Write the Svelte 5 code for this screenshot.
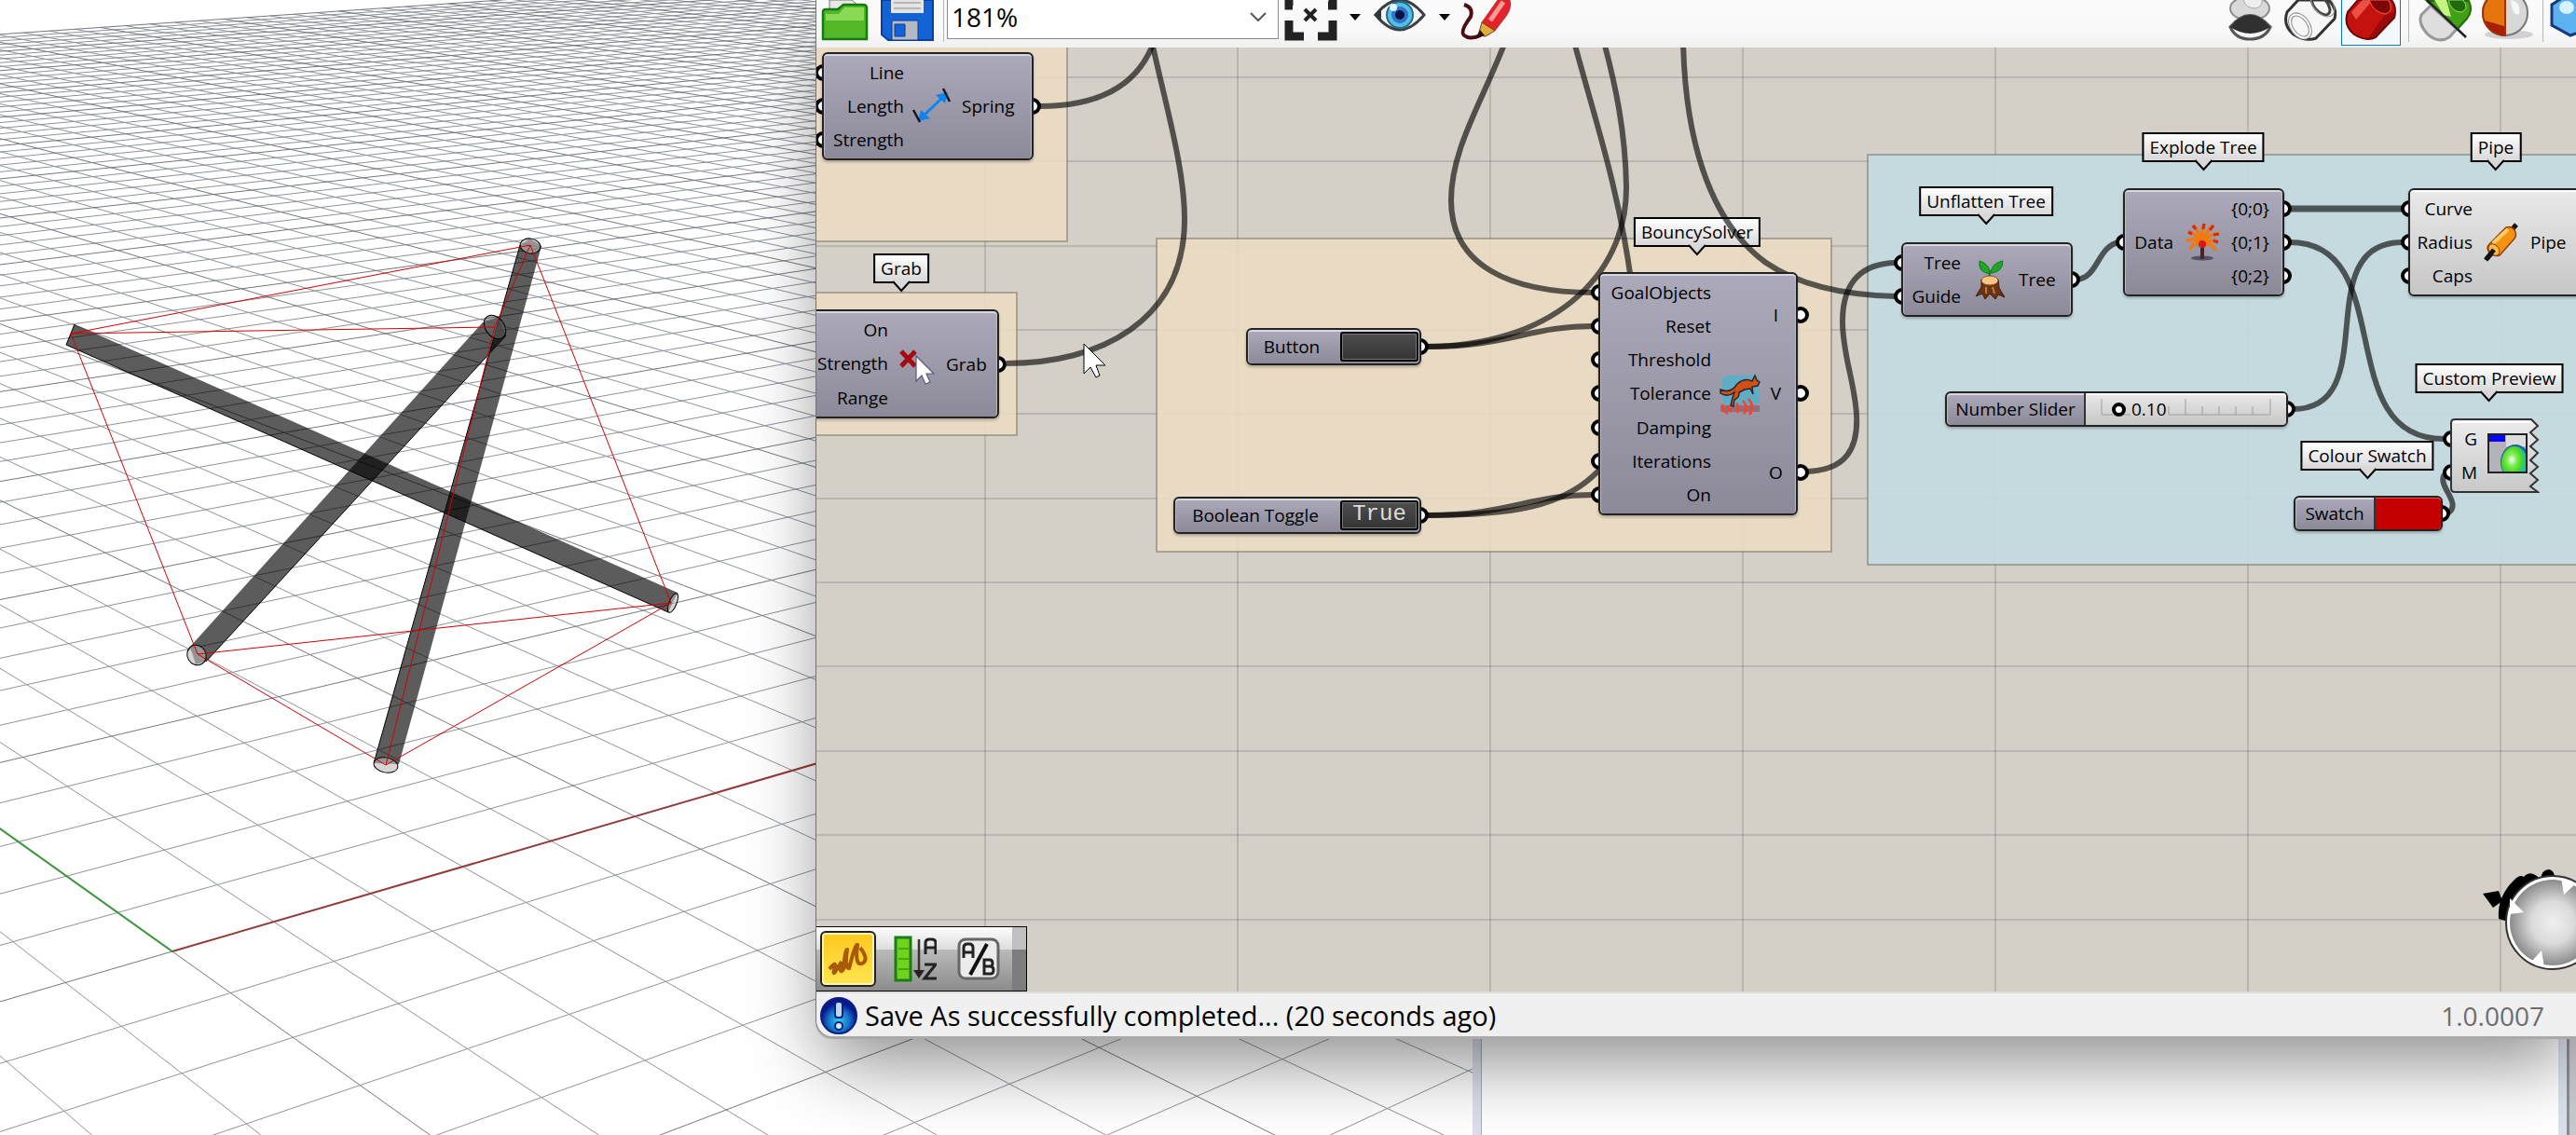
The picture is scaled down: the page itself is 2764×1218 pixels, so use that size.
<script>
  // Perspective ground plane: maps grid units to viewport pixels.
  function project(u, v) {
    const w = 1 + 0.02504 * u + 0.03311 * v;
    return { w, x: (184.8 + 116.36 * u - 54.37 * v) / w, y: -281 + 1302 / w };
  }

  const EXTENT = 70;
  const NEAR = 0.3;

  function segment(u0, v0, u1, v1) {
    let a = project(u0, v0);
    const b = project(u1, v1);
    if (b.w <= NEAR) return null;
    if (a.w < NEAR) {
      const t = (NEAR - a.w) / (b.w - a.w);
      a = project(u0 + (u1 - u0) * t, v0 + (v1 - v0) * t);
    }
    return `M${a.x.toFixed(1)} ${a.y.toFixed(1)}L${b.x.toFixed(1)} ${b.y.toFixed(1)}`;
  }

  let minor = '';
  let major = '';
  for (let i = -EXTENT; i <= EXTENT; i++) {
    const d = (segment(i, -EXTENT, i, EXTENT) ?? '') + (segment(-EXTENT, i, EXTENT, i) ?? '');
    if (i % 5 === 0) major += d;
    else minor += d;
  }
  const axisX = segment(0, 0, EXTENT, 0);
  const axisY = segment(0, 0, 0, EXTENT);

  const cables = [
    [76, 358, 569, 263], [76, 358, 531, 351], [76, 358, 212, 702], [569, 263, 720, 647],
    [569, 263, 531, 351], [531, 351, 414, 821], [720, 647, 212, 702], [212, 702, 414, 821], [414, 821, 720, 647]
  ];

  // Canvas items are kept in document coordinates; pan shifts them into the view.
  const pan = { x: 876, y: 51 };

  const groups = [
    { x: 800, y: 20, w: 345, h: 239, tone: 'tan' },
    { x: 800, y: 314, w: 291, h: 153, tone: 'tan' },
    { x: 1241, y: 256, w: 724, h: 336, tone: 'tan' },
    { x: 2004, y: 166, w: 900, h: 440, tone: 'blue' }
  ];

  const tags = [
    { x: 967, y: 272, text: 'Grab' },
    { x: 1821, y: 233, text: 'BouncySolver' },
    { x: 2131, y: 200, text: 'Unflatten Tree' },
    { x: 2364, y: 142, text: 'Explode Tree' },
    { x: 2678, y: 142, text: 'Pipe' },
    { x: 2671, y: 390, text: 'Custom Preview' },
    { x: 2540, y: 473, text: 'Colour Swatch' }
  ];

  const nodes = [
    { x: 882, y: 56, w: 227, h: 116, inW: 88, icon: 'spring', ins: ['Line', 'Length', 'Strength'], outs: ['Spring'] },
    { x: 862, y: 332, w: 210, h: 117, inW: 91, icon: 'grab', ins: ['On', 'Strength', 'Range'], outs: ['Grab'] },
    { x: 1715, y: 292, w: 214, h: 261, inW: 121, icon: 'solver', ins: ['GoalObjects', 'Reset', 'Threshold', 'Tolerance', 'Damping', 'Iterations', 'On'], outs: ['I', 'V', 'O'] },
    { x: 2040, y: 260, w: 184, h: 80, inW: 64, icon: 'unflatten', ins: ['Tree', 'Guide'], outs: ['Tree'] },
    { x: 2278, y: 202, w: 173, h: 116, inW: 54, icon: 'explode', ins: ['Data'], outs: ['{0;0}', '{0;1}', '{0;2}'] },
    { x: 2584, y: 202, w: 200, h: 116, inW: 69, icon: 'pipe', ins: ['Curve', 'Radius', 'Caps'], outs: ['Pipe'], light: true }
  ];

  const wires = [
    'M1115 114C1175 114 1220 95 1238 45',
    'M1080 390C1180 390 1271 345 1271 235C1271 180 1250 110 1236 45',
    'M1615 45C1590 110 1557 160 1557 215C1557 285 1620 314 1710 314',
    'M1530 372C1620 372 1640 350 1710 350',
    'M1530 372C1660 372 1746 300 1745 200C1744 140 1733 90 1721 45',
    'M1689 45C1712 130 1736 200 1750 300',
    'M1530 553C1620 553 1680 545 1718 502',
    'M1530 553C1620 553 1640 531 1710 531',
    'M1806 45C1808 140 1830 235 1895 282C1930 306 1980 317 2036 318',
    'M1935 506C1982 506 1994 480 1992 445C1990 410 1977 380 1977 345C1977 300 2000 282 2036 282',
    'M2228 300C2252 298 2250 264 2274 260',
    'M2457 260C2575 260 2500 471 2622 471',
    'M2460 439C2560 439 2475 260 2578 260',
    'M2626 551C2644 540 2612 520 2624 508'
  ];

  const gridX = Array.from({ length: 7 }, (_, i) => 1057 + i * 271);
  const gridY = Array.from({ length: 11 }, (_, i) => Math.round(83 + i * 90.35));

  let zoom = $state('181%');
  let toggled = $state(true);
  let amount = $state(0.1);
</script>

{#snippet nodeIcon(name)}
  <svg class="node-icon" viewBox="0 0 44 44" aria-hidden="true">
    {#if name === 'spring'}
      <path d="M10 34L34 11" stroke="#0d84f0" stroke-width="3" />
      <path d="M6 38L9 26L19 35ZM38 7L35 19L25 10Z" fill="#0d84f0" />
      <path d="M1 26L8 39M33 3L40 17" stroke="#16181d" stroke-width="2.5" />
    {:else if name === 'grab'}
      <path d="M5 8L20 24M20 8L5 24" stroke="#a50a10" stroke-width="5" />
      <path d="M21 13V40L27 34L31 43L36 41L32 32H40Z" fill="#fff" stroke="#555a78" stroke-width="1.2" />
    {:else if name === 'solver'}
      <rect x="3" y="2" width="40" height="31" rx="5" fill="#5eacc6" />
      <path d="M1 34H43V41H1Z" fill="#8e5d66" opacity=".7" />
      <path d="M3 33Q3 40 9 43M9 34Q9 39 13 41M18 32Q23 36 19 42M25 29Q32 36 26 43M31 27Q39 36 32 44" fill="none" stroke="#ff3f24" stroke-width="2.4" />
      <path d="M1 17Q12 22 19 11Q27 4 35 8L38 2L40 7L43 9L41 13L35 14L36 22L33 16L27 17L21 20Q22 25 16 28L15 35L12 34L14 26L16 20Q9 26 1 21Z" fill="#cf4f15" stroke="#292229" stroke-width="1.4" />
    {:else if name === 'unflatten'}
      <path d="M21 25Q22 15 22 12" stroke="#178d20" stroke-width="2.5" />
      <path d="M22 16Q9 14 11 2Q22 5 22 16ZM23 15Q24 4 36 2Q36 14 23 15Z" fill="#21a529" stroke="#0e7c20" />
      <path d="M13 22Q22 18 31 22L32 31L38 41L31 38L28 43L22 37L17 43L14 37L7 40L13 30Z" fill="#6b3513" stroke="#3c1b0b" />
      <ellipse cx="22" cy="23" rx="9" ry="5" fill="#f4c585" stroke="#8b4b1c" />
      <path d="M18 30V37M25 30L27 37" stroke="#c07d3c" stroke-width="2" />
    {:else if name === 'explode'}
      <ellipse cx="22" cy="39" rx="12" ry="2.5" fill="#555064" />
      <path d="M22 40V22" stroke="#43282a" stroke-width="4" />
      <path d="M21 24Q16 17 5 20M20 22Q14 11 7 11M21 22Q18 8 12 4M22 22Q21 8 24 2M23 22Q26 8 34 4M24 22Q29 12 40 13M24 24Q31 18 39 22M20 25Q13 20 9 30M24 25Q33 22 36 31" fill="none" stroke="#f07a10" stroke-width="3.6" />
      <path d="M7 11L11 13M12 4L15 8M24 2L23 8M34 4L30 9M40 13L34 14M39 22L34 20" stroke="#d42b17" stroke-width="3.2" />
      <circle cx="22" cy="24" r="4" fill="#d3191c" />
    {:else if name === 'pipe'}
      <path d="M6 40L38 3" stroke="#111" stroke-width="5" />
      <path d="M9 24L27 6Q33 4 36 9Q39 14 36 18L20 36Q14 38 9 33Q5 28 9 24Z" fill="#f79110" stroke="#93420a" stroke-width="1.5" />
      <path d="M13 23L29 8" stroke="#ffd067" stroke-width="4" />
      <ellipse cx="14" cy="30" rx="5" ry="7" transform="rotate(-40 14 30)" fill="#ffb94a" stroke="#93420a" />
      <path d="M5 41L14 30" stroke="#111" stroke-width="5" />
    {/if}
  </svg>
{/snippet}

<main class="desktop">
  <section class="viewport" aria-label="Perspective viewport">
    <svg class="scene" aria-hidden="true">
      <path d={minor} class="minor" />
      <path d={major} class="major" />
      <path d={axisX} class="axis-x" />
      <path d={axisY} class="axis-y" />
      <g class="struts">
        <path d="M80 348L727 636L717 657L71 370Z" />
        <path d="M518 346L204 694L210 713L221 710L543 360L535 340Z" />
        <path d="M558 263L401 819L428 820L581 264L569 256Z" />
      </g>
      <g class="outline">
        <path d="M80 348L71 370L717 657" />
        <path d="M543 360L221 710" />
        <path d="M558 263L401 819" />
        <ellipse cx="722" cy="647" rx="4" ry="11" transform="rotate(22 722 647)" />
        <ellipse cx="531" cy="351" rx="10" ry="14" transform="rotate(-38 531 351)" class="shaded" />
        <ellipse cx="211" cy="703" rx="10" ry="11" transform="rotate(-30 211 703)" />
        <ellipse cx="569" cy="264" rx="11" ry="8" transform="rotate(10 569 264)" />
        <ellipse cx="414" cy="821" rx="13" ry="8" transform="rotate(10 414 821)" />
      </g>
      {#each cables as [x1, y1, x2, y2]}
        <line {x1} {y1} {x2} {y2} class="cable" />
      {/each}
    </svg>
    <div class="pane"></div>
    <div class="gutter"></div>
  </section>

  <section class="window" aria-label="Definition editor">
    <header class="toolbar">
      <button class="tool" aria-label="Open">
        <svg viewBox="0 0 64 51">
          <path d="M14 0H38L45 6V20H14Z" fill="#e8e8e8" stroke="#777" />
          <path d="M7 13Q7 10 10 10H23L29 5H50Q54 5 54 9V42H7Z" fill="#52b827" stroke="#177a13" stroke-width="2.5" />
          <path d="M10 15H24L30 8H51V22H10Z" fill="#a4e86b" opacity=".7" />
        </svg>
      </button>
      <button class="tool" aria-label="Save">
        <svg viewBox="0 0 64 51">
          <path d="M6 0H61V43H13L6 37Z" fill="#1264d6" stroke="#0b3f9d" stroke-width="2" />
          <path d="M16 0H51V14H16Z" fill="#e4e4e4" />
          <path d="M19 3H48M19 9H48" stroke="#b7b7b7" stroke-width="2" />
          <path d="M17 22H45V43H17Z" fill="#b5b8c0" stroke="#083c91" />
          <path d="M20 26H31V39H20Z" fill="#1264d6" stroke="#0a3c92" />
        </svg>
      </button>
      <span class="rule"></span>
      <div class="combo">
        <select aria-label="Zoom level" bind:value={zoom}>
          <option>100%</option>
          <option>181%</option>
          <option>200%</option>
        </select>
        <svg viewBox="0 0 18 10" aria-hidden="true"><path d="M1 1L9 9L17 1" /></svg>
      </div>
      <button class="tool" aria-label="Zoom extents">
        <svg viewBox="0 0 64 51">
          <path d="M9 0V6H13M51 6H56V0M9 22V39H25M56 22V39H40" fill="none" stroke="#222" stroke-width="9" />
          <path d="M26 10L38 22M38 10L26 22" stroke="#222" stroke-width="4" />
        </svg>
      </button>
      <button class="more" aria-label="Zoom options"><svg viewBox="0 0 12 7"><path d="M0 0H12L6 7Z" /></svg></button>
      <button class="tool" aria-label="Preview">
        <svg viewBox="0 0 64 51">
          <path d="M6 16Q32 -16 58 16Q32 48 6 16Z" fill="#f5f5f5" stroke="#3c4045" stroke-width="3" />
          <circle cx="32" cy="16" r="14" fill="#55bfe0" stroke="#216b8f" stroke-width="2" />
          <circle cx="32" cy="16" r="9" fill="#2f72d2" />
          <circle cx="32" cy="16" r="5" fill="#07143a" />
          <circle cx="25" cy="8" r="4" fill="#e2f6ff" />
          <path d="M4 16L12 9V23Z" fill="#33373c" />
        </svg>
      </button>
      <button class="more" aria-label="Preview options"><svg viewBox="0 0 12 7"><path d="M0 0H12L6 7Z" /></svg></button>
      <button class="tool" aria-label="Sketch">
        <svg viewBox="4 0 64 51">
          <path d="M9 5Q19 8 16 18Q4 34 9 38Q15 43 26 38" fill="none" stroke="#4a0f10" stroke-width="4" />
          <path d="M28 24L45 0H58Q60 8 55 16L42 33Z" fill="#e4222a" stroke="#c03036" />
          <path d="M37 22L51 2" stroke="#ff9a9a" stroke-width="5" />
          <path d="M28 24L42 33L32 39L24 38Z" fill="#dfac3e" stroke="#6f4313" />
          <path d="M26 32L31 38L21 42Z" fill="#35090c" />
        </svg>
      </button>

      <span class="spacer"></span>

      <button class="tool" aria-label="No preview">
        <svg viewBox="0 0 64 51">
          <ellipse cx="32" cy="9" rx="21" ry="13" fill="#d9d9d9" stroke="#8e8e8e" stroke-width="2" />
          <path d="M25 0Q28 9 38 9Q46 7 45 0" fill="#eee" stroke="#aaa" />
          <path d="M11 29Q32 4 54 29Q48 42 32 42Q17 42 11 29Z" fill="#f5f5f5" stroke="#555" stroke-width="3" />
          <path d="M11 29Q32 3 54 29Q32 43 11 29Z" fill="#303030" />
        </svg>
      </button>
      <button class="tool" aria-label="Wireframe preview">
        <svg viewBox="0 0 64 51">
          <path d="M8 13L20 0H52Q62 8 59 20L39 41Q28 45 15 37Q3 27 8 13Z" fill="#f7f7f7" stroke="#333" stroke-width="3" />
          <ellipse cx="22" cy="28" rx="9" ry="14" transform="rotate(-35 22 28)" fill="none" stroke="#888" stroke-width="4" />
          <ellipse cx="22" cy="28" rx="9" ry="14" transform="rotate(-35 22 28)" fill="none" stroke="#fff" stroke-width="2" />
          <ellipse cx="44" cy="5" rx="7" ry="13" transform="rotate(-40 44 5)" fill="none" stroke="#444" stroke-width="3" />
          <ellipse cx="46" cy="4" rx="10" ry="16" transform="rotate(-40 46 4)" fill="none" stroke="#999" stroke-width="1" />
        </svg>
      </button>
      <button class="tool active" aria-label="Shaded preview" aria-pressed="true">
        <svg viewBox="0 0 64 51">
          <path d="M7 13L18 0H54Q60 8 57 19L37 40Q27 45 14 37Q2 27 7 13Z" fill="#c4120e" stroke="#680707" stroke-width="2" />
          <path d="M11 13L23 0H34L16 21Z" fill="#ff6a5b" opacity=".7" />
          <path d="M46 17L57 12L55 20L37 39L29 41Z" fill="#790808" opacity=".6" />
          <path d="M30 0Q35 14 48 15Q57 12 51 0Z" fill="#7e0707" stroke="#ff5a4d" />
        </svg>
      </button>
      <span class="rule wide"></span>
      <button class="tool" aria-label="Preview selected only">
        <svg viewBox="0 0 64 51">
          <path d="M12 1H57Q62 11 55 20L44 32Z" fill="#3f9f16" stroke="#236b0c" stroke-width="2" />
          <path d="M20 0H33L38 18L30 16Z" fill="#c5f482" />
          <path d="M35 0Q38 13 49 13Q58 10 51 0Z" fill="#1e6b0e" stroke="#9bdc5b" />
          <path d="M16 6L44 31L36 40Q25 47 13 37Q2 25 6 16Z" fill="#dedede" stroke="#999" stroke-width="3" />
          <path d="M12 0L54 40" stroke="#222" stroke-width="2.5" />
        </svg>
      </button>
      <button class="tool" aria-label="Document preview settings">
        <svg viewBox="0 0 64 51">
          <ellipse cx="36" cy="37" rx="26" ry="5" fill="#999" opacity=".4" />
          <circle cx="32" cy="14" r="24" fill="#d8d8d8" stroke="#777" stroke-width="2" />
          <path d="M32 -10V38A24 24 0 0 1 32 -10Z" fill="#e5760e" stroke="#a03209" stroke-width="2" />
          <path d="M31 28Q18 24 10 22Q16 36 31 38Z" fill="#a72006" />
          <path d="M38 0Q49 2 47 15Q40 18 38 0Z" fill="#fff" opacity=".8" />
        </svg>
      </button>
      <span class="rule"></span>
      <button class="tool last" aria-label="Mesh quality">
        <svg viewBox="0 0 64 51">
          <path d="M6 5L28 -9L56 5V27L26 38L6 27Z" fill="#5bb2ee" stroke="#15397d" stroke-width="3" />
          <ellipse cx="22" cy="8" rx="8" ry="7" fill="#d6f1ff" />
        </svg>
      </button>
    </header>

    <div class="canvas">
      <svg class="layer" aria-hidden="true">
        <g transform="translate({-pan.x} {-pan.y})">
          {#each gridX as x}<path class="gridline" d="M{x} 0V1100" />{/each}
          {#each gridY as y}<path class="gridline" d="M800 {y}H4000" />{/each}
          {#each groups as g}
            <rect class="group {g.tone}" x={g.x} y={g.y} width={g.w} height={g.h} />
          {/each}
        </g>
      </svg>

      {#each tags as t}
        <div class="tag" style:left="{t.x - pan.x}px" style:top="{t.y - pan.y}px">
          {t.text}
          <svg viewBox="0 0 20 13" aria-hidden="true"><path d="M1 1L10 11L19 1" /></svg>
        </div>
      {/each}

      <svg class="layer wires" aria-hidden="true">
        <g transform="translate({-pan.x} {-pan.y})">
          {#each wires as d}<path {d} />{/each}
          <path class="thick" d="M2456 224H2580" />
        </g>
      </svg>

      {#each nodes as n}
        <article class="node" style:left="{n.x - pan.x}px" style:top="{n.y - pan.y}px" style:width="{n.w}px" style:height="{n.h}px">
          <div class="body" class:light={n.light}>
            <ul class="ins" style:width="{n.inW}px">
              {#each n.ins as name}<li class="port in">{name}</li>{/each}
            </ul>
            {@render nodeIcon(n.icon)}
            <ul class="outs">
              {#each n.outs as name}<li class="port out" class:mid={n.icon === 'solver'}>{name}</li>{/each}
            </ul>
          </div>
        </article>
      {/each}

      <div class="node" style:left="{1337 - pan.x}px" style:top="{352 - pan.y}px" style:width="188px">
        <div class="body strip port out">
          <label for="pulse">Button</label>
          <button id="pulse" class="dark" aria-label="Button"></button>
        </div>
      </div>

      <div class="node" style:left="{1259 - pan.x}px" style:top="{533 - pan.y}px" style:width="266px">
        <div class="body strip port out">
          <label for="toggle">Boolean Toggle</label>
          <button id="toggle" class="dark" aria-pressed={toggled} onclick={() => (toggled = !toggled)}>{toggled ? 'True' : 'False'}</button>
        </div>
      </div>

      <div class="node" style:left="{2087 - pan.x}px" style:top="{420 - pan.y}px" style:width="368px">
        <div class="body slider port out">
          <label for="amount">Number Slider</label>
          <div class="track">
            <svg viewBox="0 0 183 20" aria-hidden="true">
              <path d="M1 0V17H32M73 17H182M91 0V17M109 8V17M127 8V17M145 8V17M163 8V17M182 0V17M73 8V17" />
            </svg>
            <input id="amount" type="range" min="0" max="1" step="0.01" bind:value={amount} />
            <output for="amount">{amount.toFixed(2)}</output>
          </div>
        </div>
      </div>

      <div class="node" style:left="{2461 - pan.x}px" style:top="{532 - pan.y}px" style:width="160px">
        <div class="body swatch port out">
          <label for="colour">Swatch</label>
          <button id="colour" class="colour" aria-label="Swatch colour"></button>
        </div>
      </div>

      <div class="node torn" style:left="{2629 - pan.x}px" style:top="{449 - pan.y}px" style:width="96px" style:height="80px">
        <ul class="ins">
          <li class="port in">G</li>
          <li class="port in">M</li>
        </ul>
        <svg class="torn-shape" viewBox="0 0 96 80" aria-hidden="true">
          <defs>
            <linearGradient id="silver" x2="0" y2="1"><stop stop-color="#ececec" /><stop offset="1" stop-color="#c8c8c8" /></linearGradient>
            <radialGradient id="lime" cx=".4" cy=".4"><stop stop-color="#fff" /><stop offset=".35" stop-color="#7ff05a" /><stop offset=".75" stop-color="#4fd51c" /><stop offset="1" stop-color="#12c9a0" /></radialGradient>
            <clipPath id="frame"><rect x="41" y="17" width="41" height="41" /></clipPath>
          </defs>
          <path d="M5 1H87L94 8L86 15L94 23L86 30L94 37L86 45L94 52L86 59L94 66L86 73L94 79H5Q1 79 1 75V5Q1 1 5 1Z" fill="url(#silver)" stroke="#333" stroke-width="2" />
          <path d="M3 4H86" stroke="#fff" stroke-width="2" />
          <rect x="41" y="17" width="41" height="41" fill="#b4b4b8" stroke="#222" stroke-width="2" />
          <g clip-path="url(#frame)">
            <path d="M60 17H82V30H60Z" fill="#ddd" />
            <rect x="41" y="17" width="18" height="8" fill="#0808f5" />
            <ellipse cx="70" cy="47" rx="16" ry="19" fill="#255fa8" />
            <ellipse cx="69" cy="48" rx="14" ry="18" fill="url(#lime)" />
          </g>
          <rect x="41" y="17" width="41" height="41" fill="none" stroke="#222" stroke-width="2" />
        </svg>
      </div>

      <svg class="cursor" viewBox="0 0 26 38" aria-hidden="true" style:left="{1162 - pan.x}px" style:top="{368 - pan.y}px">
        <path d="M1 1V33L8 26L14 37L18 35L14 24H24Z" />
      </svg>

      <svg class="compass" viewBox="0 0 120 120" aria-hidden="true">
        <defs>
          <radialGradient id="ball"><stop stop-color="#f0f0f0" /><stop offset=".5" stop-color="#dadada" /><stop offset="1" stop-color="#8b8b8b" /></radialGradient>
        </defs>
        <path d="M0 29L17 26L21 37L11 44Z" />
        <path d="M17 56Q15 32 34 14Q40 8 44 11Q50 4 58 10L62 14Q63 3 71 3Q76 4 77 10L40 30L24 58Z" />
        <circle cx="75" cy="60" r="50" fill="#fff" stroke="#333" stroke-width="2" />
        <circle cx="75" cy="60" r="46" fill="url(#ball)" />
        <path d="M29 34L44 49L29 51ZM84 12L87 30L100 18ZM52 102L63 90L66 108Z" fill="#fff" />
      </svg>

      <div class="palette" role="toolbar" aria-label="Canvas widgets">
        <button class="chip on" aria-label="Sketch widget" aria-pressed="true">
          <svg viewBox="0 0 50 50"><path d="M5 36Q12 27 11 33Q8 43 11 39L18 28Q15 43 20 36Q22 14 24 15Q21 36 26 35Q33 8 35 10Q32 33 40 30Q48 26 38 13" fill="none" stroke="#a85a08" stroke-width="4" /></svg>
        </button>
        <button class="chip" aria-label="Align widget">
          <svg viewBox="0 0 50 50">
            <path d="M6 2H22V48H6Z" fill="#6fd31b" stroke="#1c7c17" stroke-width="3" />
            <path d="M9 14H20M9 25H20M9 36H20" stroke="#47a80e" stroke-width="2" />
            <path d="M31 4V42" stroke="#333" stroke-width="2.5" /><path d="M25 37H37L31 46Z" fill="#222" />
            <path d="M38 20V8Q38 4 42 4H45Q49 4 49 8V20M38 13H49M37 31H49L37 46H50" fill="none" stroke="#222" stroke-width="3" />
          </svg>
        </button>
        <button class="chip" aria-label="Rename widget">
          <svg viewBox="0 0 50 50">
            <rect x="4" y="4" width="42" height="42" rx="7" fill="#ececec" stroke="#666" stroke-width="3" />
            <path d="M34 9L16 42" stroke="#111" stroke-width="4" />
            <path d="M9 24V13Q9 9 13 9H15Q19 9 19 13V24M9 18H19M31 26V41H38Q41 41 41 37Q41 33 37 33Q40 33 40 30Q40 26 37 26ZM31 33H38" fill="none" stroke="#222" stroke-width="3" />
          </svg>
        </button>
      </div>
    </div>

    <footer class="status">
      <svg viewBox="0 0 40 40" aria-hidden="true">
        <defs><radialGradient id="info" cy=".65"><stop stop-color="#2fd0ea" /><stop offset=".6" stop-color="#1470c8" /><stop offset="1" stop-color="#08188e" /></radialGradient></defs>
        <circle cx="20" cy="20" r="19" fill="url(#info)" stroke="#0c1c85" stroke-width="2" />
        <rect x="16" y="5" width="8" height="17" rx="3" fill="#bcd8f4" stroke="#0a2080" stroke-width="2" />
        <circle cx="20" cy="31" r="4" fill="#d8ecfa" stroke="#0a2080" stroke-width="2" />
      </svg>
      <p>Save As successfully completed... (20 seconds ago)</p>
      <span class="version">1.0.0007</span>
    </footer>
  </section>
</main>

<style>
  :global(body) { margin: 0; background: #fff; }
  .desktop {
    display: grid;
    grid-template: 100vh / 875px minmax(0, 1fr);
    overflow: hidden;
    font-family: 'Open Sans', 'Noto Sans', sans-serif;
    font-size: 19px;
    line-height: 24px;
    color: #000;
  }
  button, select, input { font: inherit; color: inherit; margin: 0; padding: 0; border: 0; background: none; }
  svg { display: block; }
  ul { list-style: none; margin: 0; padding: 0; }

  .viewport {
    grid-area: 1 / 1 / 2 / 3;
    display: grid;
    grid-template-columns: 1580px minmax(0, 1fr) 10px;
    background: #fff;
  }
  .scene { width: 100%; height: 100vh; fill: none; }
  .minor { stroke: #8e939b; stroke-width: 1; }
  .major { stroke: #73777e; stroke-width: 1; }
  .axis-x { stroke: #963c3c; stroke-width: 2; }
  .axis-y { stroke: #3c963c; stroke-width: 2; }
  .struts { fill: #000; fill-opacity: 0.64; }
  .outline { stroke: #000; stroke-width: 1; fill: #bbb; }
  .outline path { fill: none; }
  .outline ellipse { fill-opacity: 0.6; }
  .outline .shaded { fill: #666; }
  .cable { stroke: #d40000; stroke-width: 1; }
  .pane { border: solid #dde0ec; border-width: 0 9px; background: #fff; box-shadow: inset 1px 0 #a9adc4; }
  .gutter { background: #c9c9cc; border-left: 3px solid #8b8e93; }

  .window {
    grid-area: 1 / 2;
    display: flex;
    flex-direction: column;
    margin-bottom: 106px;
    border-left: 1px solid #77746e;
    border-bottom-left-radius: 18px;
    background: #f0f0f0;
    box-shadow: 0 3px 0 #a9a9a9, 0 36px 80px -8px rgba(0, 0, 0, 0.45);
    overflow: hidden;
    position: relative;
  }

  .toolbar {
    display: flex;
    align-items: flex-start;
    flex: none;
    height: 51px;
    overflow: hidden;
    background: linear-gradient(#fbfbfb, #f8f8f8 70%, #f0f0f0);
  }
  .tool { flex: none; width: 64px; height: 51px; }
  .tool svg { width: 64px; height: 51px; }
  .tool.active { box-sizing: border-box; height: 49px; margin-left: 2px; border: 1px solid #0078d7; border-top: 0; background: #f3f8fd; overflow: hidden; }
  .tool.active svg { margin-left: -1px; }
  .tool.last { width: 32px; overflow: hidden; }
  .rule { flex: none; width: 1px; height: 45px; margin: 0 3px 0 8px; background: #b5b5b5; }
  .rule.wide { margin-right: 7px; }
  .spacer { flex: 1; }
  .more { flex: none; width: 20px; height: 36px; margin: 0 6px; display: flex; align-items: center; justify-content: center; }
  .more svg { width: 12px; height: 7px; }
  .combo {
    flex: none;
    box-sizing: border-box;
    display: flex;
    align-items: center;
    width: 356px;
    height: 42px;
    padding: 0 12px 6px 4px;
    margin-right: 2px;
    border: 1px solid #8a8a8a;
    border-top: 0;
    background: #fff;
  }
  .combo select { flex: 1; appearance: none; font-size: 28px; line-height: 36px; outline: 0; }
  .combo svg { width: 18px; height: 10px; fill: none; stroke: #555; stroke-width: 2; }

  .canvas { position: relative; flex: 1; overflow: hidden; background: #d4d0c8; }
  .layer { position: absolute; inset: 0; width: 100%; height: 100%; fill: none; }
  .gridline { stroke: rgba(0, 0, 0, 0.12); stroke-width: 2; }
  .group { stroke: rgba(90, 90, 80, 0.42); stroke-width: 2; }
  .group.tan { fill: rgba(233, 218, 194, 0.92); }
  .group.blue { fill: rgba(195, 218, 224, 0.94); }
  .wires { stroke: #000; stroke-width: 6; stroke-opacity: 0.62; }
  .wires .thick { stroke-width: 7; }

  .tag {
    position: absolute;
    box-sizing: border-box;
    height: 32px;
    padding: 2px 6px;
    transform: translateX(-50%);
    border: 2px solid #000;
    background: linear-gradient(#fff, #d8d8d8);
    white-space: nowrap;
  }
  .tag svg { position: absolute; left: calc(50% - 10px); top: 27px; width: 20px; height: 13px; }
  .tag path { fill: #d8d8d8; stroke: #000; stroke-width: 2; }

  .node { position: absolute; isolation: isolate; box-sizing: border-box; }
  .body {
    box-sizing: border-box;
    display: flex;
    height: 100%;
    padding: 2px 0;
    border: 2px solid #222;
    border-radius: 6px;
    background: linear-gradient(#acaaba, #8c8a99);
    box-shadow: inset 0 2px 0 #d8d7e2, inset 1px 0 0 #bbb9c8, inset -1px 0 0 #bbb9c8, 0 2px 3px rgba(0, 0, 0, 0.25);
  }
  .body.light { background: linear-gradient(#e9e9e9, #c6c6c6); box-shadow: inset 0 2px 0 #fff, 0 2px 3px rgba(0, 0, 0, 0.25); }
  .ins, .outs { display: flex; flex-direction: column; }
  .ins { flex: none; text-align: right; margin-left: -2px; }
  .outs { flex: 1; margin-right: -2px; }
  .port { position: relative; }
  li.port { flex: 1; display: flex; align-items: center; }
  li.in { justify-content: flex-end; }
  .port::before {
    content: '';
    position: absolute;
    z-index: -1;
    top: calc(50% - 9px);
    box-sizing: border-box;
    width: 18px;
    height: 18px;
    border: 4px solid #000;
    border-radius: 50%;
    background: #fff;
  }
  .in::before { left: -8px; }
  .out::before { right: -8px; }
  .strip::before, .slider::before, .swatch::before { right: -10px; }
  li.mid { justify-content: center; padding-right: 20px; }
  .node-icon { flex: none; align-self: center; width: 44px; height: 44px; margin: 0 9px; overflow: visible; }

  .strip, .slider, .swatch { padding: 0; align-items: stretch; }
  .strip { height: 40px; padding: 2px 1px; }
  label { flex: 1; display: flex; align-items: center; justify-content: center; white-space: nowrap; }
  .strip label { padding-right: 6px; }
  .dark {
    box-sizing: border-box;
    width: 84px;
    border: 2px solid #000;
    border-radius: 3px;
    background: linear-gradient(#4d4d4d, #343434);
    box-shadow: inset 0 0 0 1px #777;
    color: #ddd;
    font-family: 'Liberation Mono', monospace;
    font-size: 24px;
    line-height: 24px;
    padding-bottom: 2px;
  }
  .slider { height: 38px; }
  .track { position: relative; box-sizing: border-box; width: 217px; border-left: 2px solid #333; border-radius: 0 4px 4px 0; background: linear-gradient(#e9e9e9, #c6c6c6); box-shadow: inset 0 2px #fff; }
  .track svg { position: absolute; left: 16px; top: 6px; width: 183px; height: 20px; fill: none; stroke: #9d9d9d; stroke-width: 1; }
  .track input { position: absolute; left: 10px; top: 0; width: 197px; height: 34px; appearance: none; outline: 0; }
  .track input::-webkit-slider-thumb { appearance: none; box-sizing: border-box; width: 15px; height: 15px; border: 4px solid #000; border-radius: 50%; background: #fff; }
  .track output { position: absolute; left: 49px; top: 5px; }
  .swatch { height: 38px; }
  .colour { box-sizing: border-box; width: 72px; border-left: 2px solid #333; border-radius: 0 4px 4px 0; background: #c40000; box-shadow: inset 0 1px #e05050; }

  .torn { display: flex; }
  .torn-shape { position: absolute; inset: 0; z-index: -1; }
  .torn .ins { width: 29px; margin: 4px 0; }
  .torn .port::before { z-index: -2; }

  .cursor { position: absolute; width: 26px; height: 38px; fill: #fff; stroke: #000; stroke-width: 1; }
  .compass { position: absolute; right: -20px; bottom: 14px; width: 120px; height: 120px; }

  .palette {
    position: absolute;
    left: 0;
    bottom: 0;
    box-sizing: border-box;
    display: flex;
    align-items: center;
    gap: 10px;
    height: 70px;
    width: 226px;
    padding-left: 4px;
    border: 1px solid #000;
    border-left: 0;
    background:
      linear-gradient(#c0c0c0 36%, #7d7d7d 36%) right / 15px 100% no-repeat,
      linear-gradient(#fdfdfd, #dcdcdc 36%, #bababa 36%, #8c8c8c);
  }
  .chip { box-sizing: border-box; width: 60px; height: 60px; padding: 5px; border-radius: 6px; }
  .chip svg { width: 50px; height: 50px; }
  .chip.on { padding: 3px; border: 2px solid #222; background: linear-gradient(#fec81e, #ffe550); box-shadow: inset 0 0 0 2px #fff5b0; }

  .status {
    flex: none;
    box-sizing: border-box;
    display: flex;
    align-items: center;
    height: 48px;
    padding: 2px 34px 0 4px;
    border-top: 2px solid #dcdcdc;
    background: #f0f0f0;
    font-size: 29px;
    line-height: 36px;
  }
  .status svg { width: 40px; height: 40px; }
  .status p { flex: 1; margin: 0 0 0 8px; }
  .version { color: #6d6d6d; font-size: 28px; }
</style>
